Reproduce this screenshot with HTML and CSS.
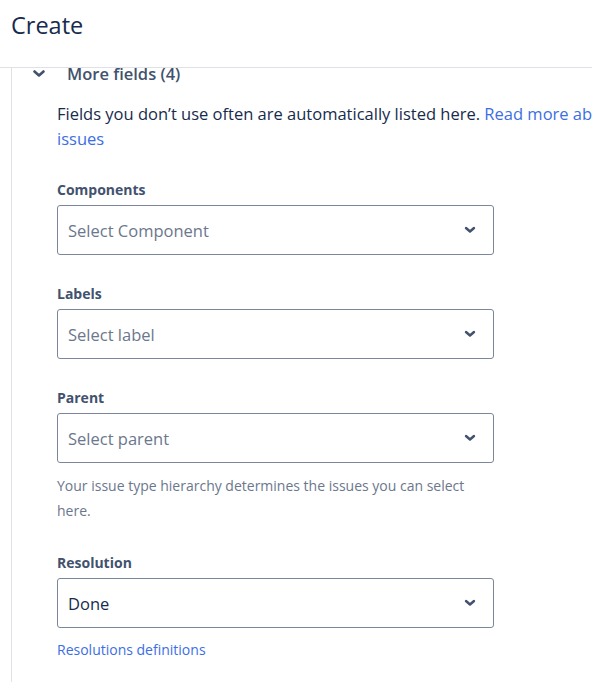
FILE: index.html
```html
<!DOCTYPE html>
<html lang="en">
<head>
<meta charset="utf-8">
<title>Create</title>
<link rel="stylesheet" href="styles.css">
</head>
<body>
<header class="header">
  <h1 class="title">Create</h1>
</header>
<main class="scroll">
  <div class="panel">
    <div class="content">
      <div class="section-head">
        <svg class="section-chevron" width="12" height="8" viewBox="0 0 12 8"><path d="M1.5 1.5 L6 5.5 L10.5 1.5" fill="none" stroke="#42526e" stroke-width="2.6" stroke-linecap="round" stroke-linejoin="round"/></svg>
        <span class="section-title">More fields (4)</span>
      </div>
      <div class="section-body">
        <p class="desc">Fields you don’t use often are automatically listed here. <a class="link" href="#">Read more about hidden fields in issues</a></p>

        <div class="field">
          <label class="label">Components</label>
          <div class="select"><span class="placeholder">Select Component</span><svg class="caret" width="12" height="8" viewBox="0 0 12 8"><path d="M2 2 L6 5.5 L10 2" fill="none" stroke="#42526e" stroke-width="2.4" stroke-linecap="round" stroke-linejoin="round"/></svg></div>
        </div>

        <div class="field">
          <label class="label">Labels</label>
          <div class="select"><span class="placeholder">Select label</span><svg class="caret" width="12" height="8" viewBox="0 0 12 8"><path d="M2 2 L6 5.5 L10 2" fill="none" stroke="#42526e" stroke-width="2.4" stroke-linecap="round" stroke-linejoin="round"/></svg></div>
        </div>

        <div class="field">
          <label class="label">Parent</label>
          <div class="select"><span class="placeholder">Select parent</span><svg class="caret" width="12" height="8" viewBox="0 0 12 8"><path d="M2 2 L6 5.5 L10 2" fill="none" stroke="#42526e" stroke-width="2.4" stroke-linecap="round" stroke-linejoin="round"/></svg></div>
          <p class="help">Your issue type hierarchy determines the issues you can select here.</p>
        </div>

        <div class="field field-last">
          <label class="label">Resolution</label>
          <div class="select"><span class="value">Done</span><svg class="caret" width="12" height="8" viewBox="0 0 12 8"><path d="M2 2 L6 5.5 L10 2" fill="none" stroke="#42526e" stroke-width="2.4" stroke-linecap="round" stroke-linejoin="round"/></svg></div>
          <a class="link small" href="#">Resolutions definitions</a>
        </div>
      </div>
    </div>
  </div>
</main>
</body>
</html>
```

FILE: styles.css
```css
* { box-sizing: border-box; }

html, body {
  margin: 0;
  padding: 0;
  background: #ffffff;
  overflow: hidden;
  height: 687px;
}

body {
  font-family: "Open Sans", "Noto Sans", "Liberation Sans", sans-serif;
  color: #172b4d;
}

.header {
  height: 68px;
  border-bottom: 1px solid #dfe1e6;
  padding: 7px 0 0 11px;
}

.title {
  margin: 0;
  font-size: 23.5px;
  font-weight: 400;
  line-height: 36px;
  color: #172b4d;
}

.scroll {
  height: 619px;
  overflow: hidden;
  padding-left: 11px;
}

.panel {
  border-left: 1px solid #dfe1e6;
  height: 100%;
  width: 820px;
}

.content {
  margin-top: -5px;
}

.section-head {
  display: flex;
  align-items: center;
  height: 22px;
  padding-left: 21px;
}

.section-chevron {
  display: block;
  margin-right: 22px;
}

.section-title {
  font-size: 16.5px;
  font-weight: 600;
  color: #42526e;
  line-height: 22px;
}

.section-body {
  padding: 16px 0 0 45px;
}

.desc {
  margin: 0;
  width: 720px;
  font-size: 16.5px;
  line-height: 25px;
  color: #172b4d;
}

.link {
  color: #3c6ee4;
  text-decoration: none;
}

.field {
  display: flex;
  flex-direction: column;
  align-items: flex-start;
  margin-top: 29px;
}

.field-last { margin-top: 30px; }

.label {
  font-size: 14px;
  font-weight: 700;
  line-height: 20px;
  color: #42526e;
  margin-bottom: 5px;
}

.select {
  width: 437px;
  height: 50px;
  border: 1px solid #7a869a;
  border-radius: 3px;
  display: flex;
  align-items: center;
  justify-content: space-between;
  padding: 0 17px 0 10px;
}

.placeholder {
  font-size: 16.5px;
  color: #6b778c;
}

.value {
  font-size: 16.5px;
  color: #172b4d;
}

.caret { display: block; }

.help {
  margin: 10px 0 0;
  width: 420px;
  font-size: 14px;
  line-height: 25px;
  color: #6b778c;
}

.small {
  margin-top: 12px;
  font-size: 14px;
  line-height: 20px;
}
```
